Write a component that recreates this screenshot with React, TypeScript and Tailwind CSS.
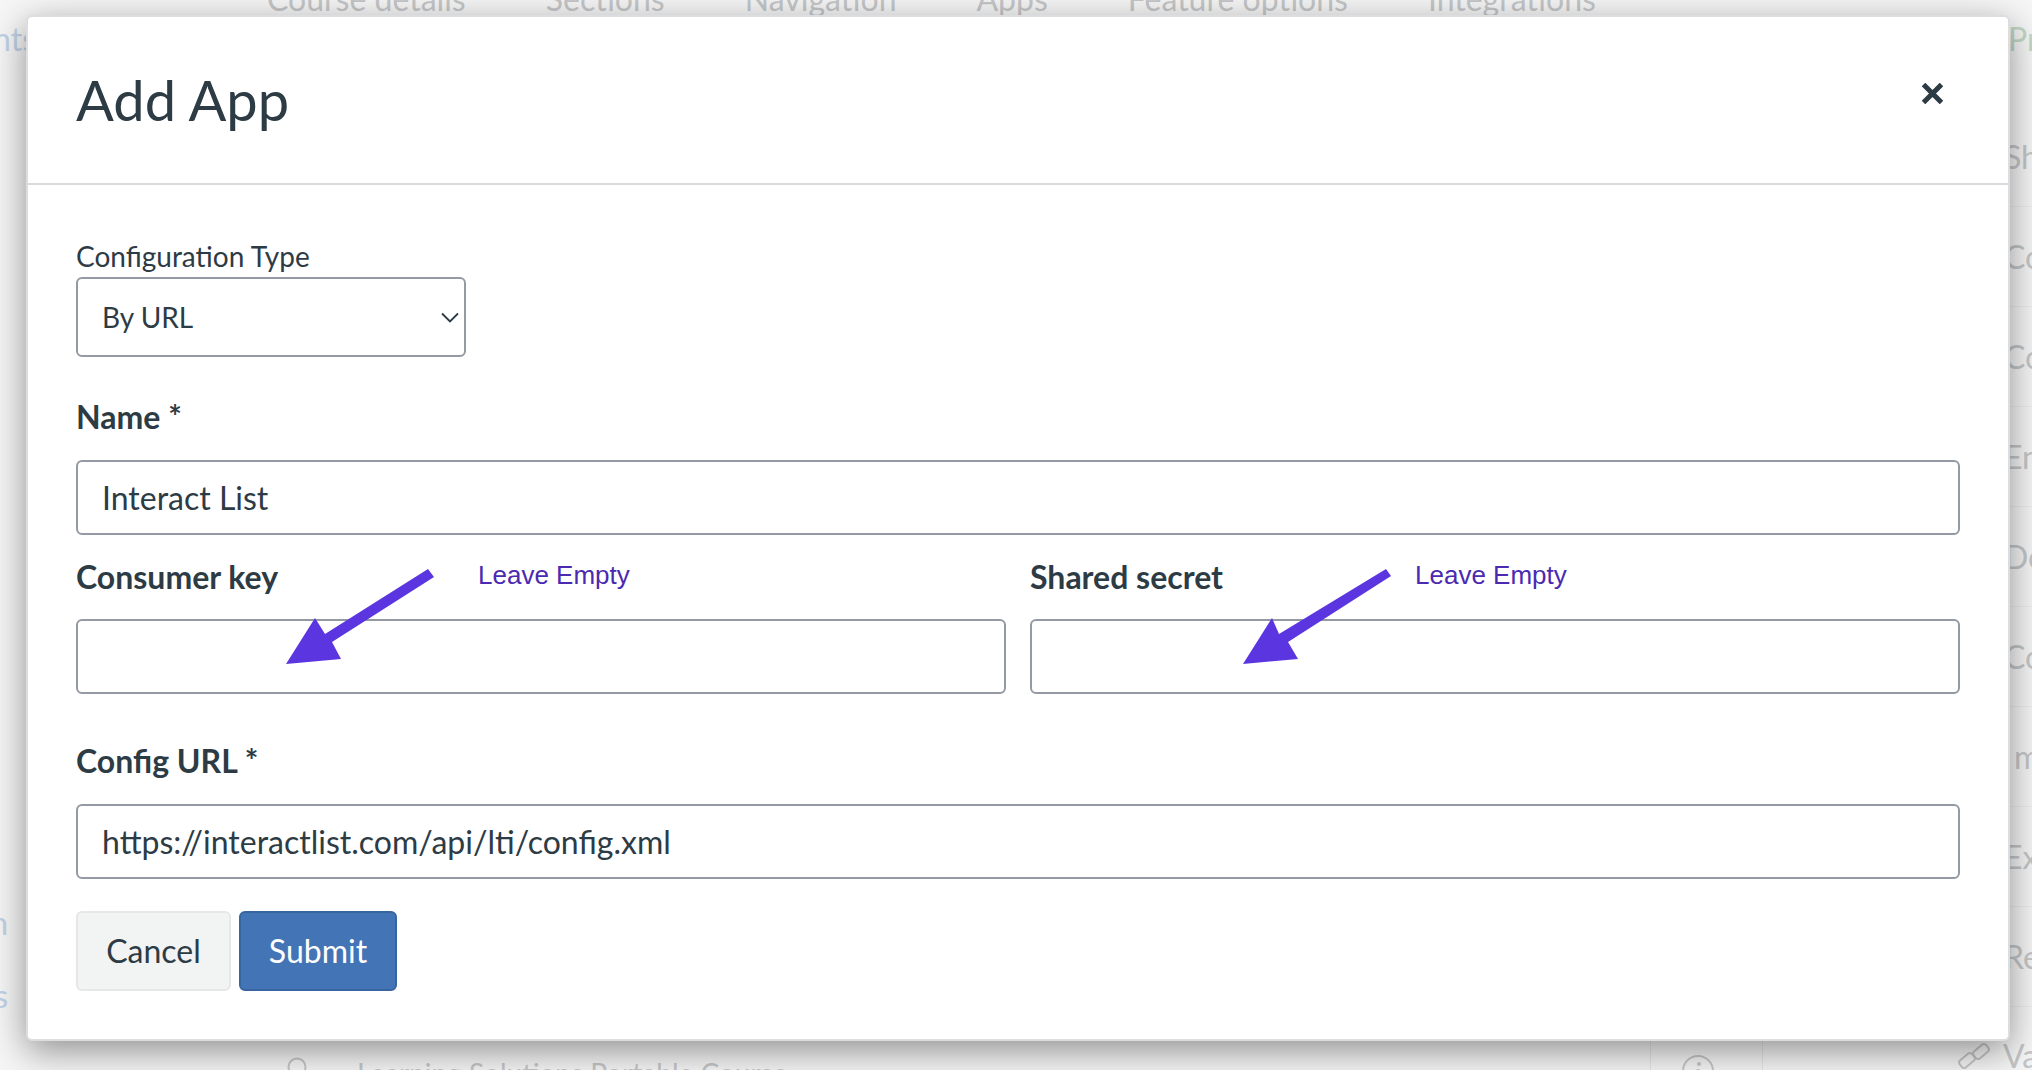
import React from 'react';

const tabs: string[] = ['Course details', 'Sections', 'Navigation', 'Apps', 'Feature options', 'Integrations'];
const rows: string[] = ['Show', 'Copy', 'Course', 'Enable', 'Default', 'Copy', 'Import', 'Export', 'Reset'];

const fieldClass =
  'block w-full h-[75px] rounded-[6px] border-2 border-[#949aa3] bg-white px-[24px] text-[32px] text-[#2d3b45] outline-none';
const labelClass = 'block h-[40px] text-[32px] leading-[40px] font-bold text-[#2d3b45]';

const Arrow: React.FC<{ className: string; points: string }> = ({ className, points }) => (
  <svg className={`absolute ${className}`} width="170" height="110" viewBox="0 0 170 110">
    <polygon points={points} fill="#5a35e0" />
  </svg>
);

const Note: React.FC<{ className: string }> = ({ className }) => (
  <span className={`absolute top-[543px] text-[26px] leading-[30px] text-[#4a2ab0] font-['Liberation_Sans',sans-serif] ${className}`}>
    Leave Empty
  </span>
);

const PageBehind: React.FC = () => (
  <div className="h-[1070px] overflow-hidden bg-[#f6f6f6] text-[#c4c6c8]">
    <div className="-mt-[19px] flex h-[29px] items-start gap-[80px] pl-[267px] text-[32px] leading-[36px]">
      {tabs.map((tab) => (
        <span key={tab} className="whitespace-nowrap">
          {tab}
        </span>
      ))}
    </div>
    <div className="flex">
      <div className="flex w-[27px] flex-col overflow-hidden text-[32px] leading-[44px] text-[#c0d2e6]">
        <span className="mr-[-9px] mt-[7px] self-end whitespace-nowrap">Assignments</span>
        <span className="ml-[-19px] mt-[840px] self-end whitespace-nowrap pr-[19px]">Collaboration</span>
        <span className="mt-[29px] self-end whitespace-nowrap pr-[19px]">Settings</span>
      </div>
      <div className="flex-1 pl-[222px]">
        <div className="flex h-[97px] justify-end overflow-hidden">
          <span className="mt-[7px] h-[44px] w-[24px] overflow-hidden text-[32px] leading-[44px] text-[#c2d8c6]">Preview</span>
        </div>
        {rows.map((row, i) => (
          <div key={i} className="flex h-[100px] items-center justify-end border-b border-[#ececec]">
            <span className={`overflow-hidden whitespace-nowrap text-[32px] ${row === 'Import' ? 'w-[18px]' : 'w-[28px]'}`}>
              {row === 'Import' ? 'mport' : row}
            </span>
          </div>
        ))}
        <div className="flex h-[100px] text-[#c4c6c8]">
          <div className="w-[108px] pl-[36px] pt-[43px]">
            <svg width="24" height="40" viewBox="0 0 24 40" fill="none" stroke="currentColor" strokeWidth="2">
              <circle cx="12" cy="17" r="8.5" />
            </svg>
          </div>
          <span className="flex-1 whitespace-nowrap pt-[48px] text-[28px] leading-[36px]">
            Learning Solutions Portable Course
          </span>
          <div className="w-[112px] border-l border-[#e6e6e6] pl-[31px] pt-[48px]">
            <svg width="32" height="32" viewBox="0 0 32 32" fill="none" stroke="currentColor" strokeWidth="2">
              <circle cx="16" cy="16" r="15" />
              <circle cx="17" cy="9" r="2" fill="currentColor" stroke="none" />
              <path d="M16 14v12" strokeWidth="3" />
            </svg>
          </div>
          <div className="w-[241px] border-l border-[#e6e6e6] pl-[195px] pt-[34px]">
            <svg width="32" height="30" viewBox="0 0 32 30" fill="none" stroke="currentColor" strokeWidth="2">
              <rect x="1" y="15" width="16" height="9" rx="3" transform="rotate(-40 9 19.5)" />
              <rect x="15" y="6" width="16" height="9" rx="3" transform="rotate(-40 23 10.5)" />
            </svg>
          </div>
          <span className="w-[29px] overflow-hidden whitespace-nowrap pt-[30px] text-[32px] leading-[38px]">Value</span>
        </div>
      </div>
    </div>
  </div>
);

const App: React.FC = () => {
  return (
    <div className="relative h-[1070px] overflow-hidden font-['Lato',sans-serif]">
      <PageBehind />

      <div className="absolute left-[26px] top-[15px] h-[1026px] w-[1984px] rounded-[6px] border-2 border-[#dcdde1] bg-white shadow-[0_10px_36px_rgba(0,0,0,0.42)]">
        <div className="flex h-[168px] items-center justify-between border-b-2 border-[#d9dade] pb-[4px] pl-[48px] pr-[64px]">
          <h1 className="mt-[3px] text-[56px] leading-[70px] font-normal text-[#2d3b45]">Add App</h1>
          <svg className="mb-[10px] mr-[1px]" width="21" height="21" viewBox="0 0 21 21" stroke="#2d3b45" strokeWidth="5">
            <path d="M1.5 1.5l18 18M19.5 1.5l-18 18" />
          </svg>
        </div>

        <div className="px-[48px] pt-[51px]">
          <label className="mb-[1px] block h-[40px] text-[28px] leading-[40px] text-[#2d3b45]">Configuration Type</label>
          <div className="relative w-[390px]">
            <select
              defaultValue="url"
              className="block h-[80px] w-full appearance-none rounded-[6px] border-2 border-[#949aa3] bg-white px-[24px] text-[28px] text-[#2d3b45] outline-none"
            >
              <option value="url">By URL</option>
            </select>
            <svg
              className="pointer-events-none absolute right-[6px] top-[35px]"
              width="20"
              height="11"
              viewBox="0 0 20 11"
              fill="none"
              stroke="#2d3b45"
              strokeWidth="1.8"
            >
              <path d="M2 1.5l8 8 8-8" />
            </svg>
          </div>

          <label className={`${labelClass} mb-[23px] mt-[40px]`}>Name *</label>
          <input className={fieldClass} defaultValue="Interact List" />

          <div className="mt-[22px] grid grid-cols-2 gap-[24px]">
            <div>
              <label className={`${labelClass} mb-[22px]`}>Consumer key</label>
              <input className={fieldClass} />
            </div>
            <div>
              <label className={`${labelClass} mb-[22px]`}>Shared secret</label>
              <input className={fieldClass} />
            </div>
          </div>

          <label className={`${labelClass} mb-[23px] mt-[47px]`}>Config URL *</label>
          <input className={fieldClass} defaultValue="https://interactlist.com/api/lti/config.xml" />

          <div className="mt-[32px] flex gap-[8px]">
            <button className="h-[80px] w-[155px] rounded-[6px] border-2 border-[#e6e7e8] bg-[#f2f3f3] text-[32px] text-[#2d3b45]">
              Cancel
            </button>
            <button className="h-[80px] w-[158px] rounded-[6px] border-2 border-[#37659f] bg-[#4375b6] text-[32px] text-white">
              Submit
            </button>
          </div>
        </div>

        <Arrow className="left-[252px] top-[544px]" points="148,8 154,16 52,81 61,98 6,103 35,57 45,73" />
        <Note className="left-[450px]" />
        <Arrow className="left-[1212px] top-[544px]" points="146,8 151,15 48,81 58,98 3,103 32,57 39,73" />
        <Note className="left-[1387px]" />
      </div>
    </div>
  );
};

export default App;
